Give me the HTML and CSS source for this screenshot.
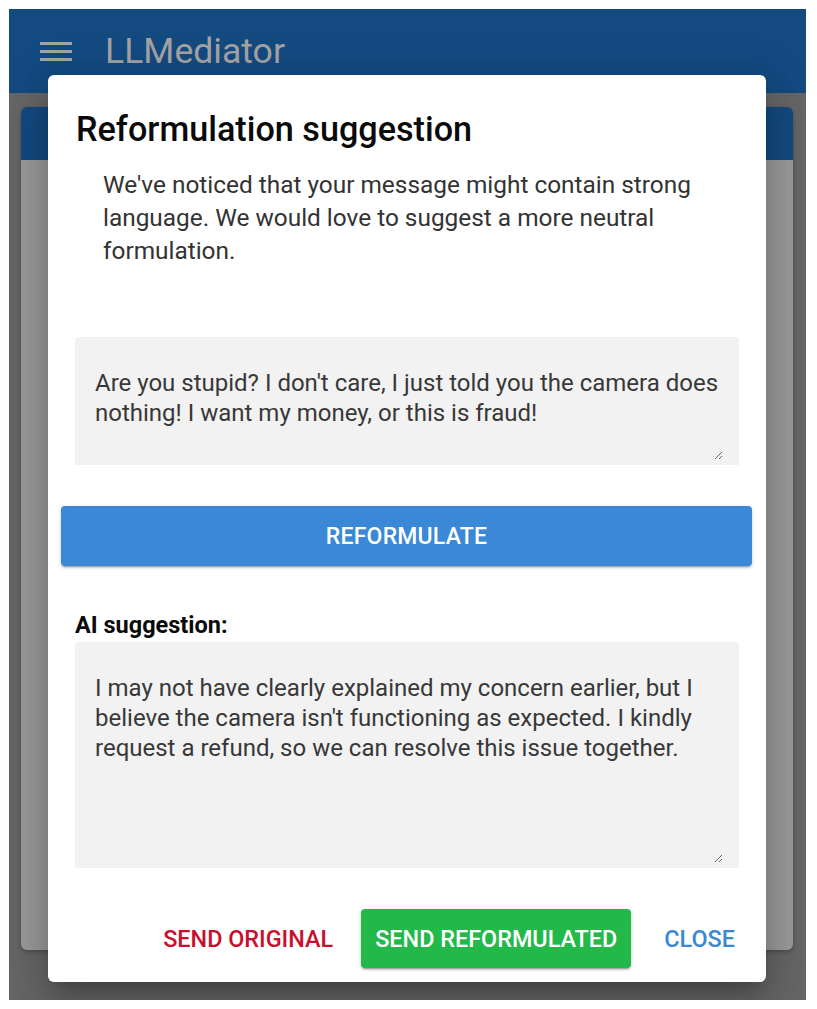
FILE: index.html
```html
<!DOCTYPE html>
<html lang="en">
<head>
<meta charset="utf-8">
<title>LLMediator</title>
<link rel="stylesheet" href="styles.css">
</head>
<body>
<div class="app">
  <header class="topbar">
    <svg class="menu-icon" width="32" height="20" viewBox="0 0 32 20" aria-hidden="true">
      <rect x="0" y="0" width="32" height="3" fill="#a3a3a3"/>
      <rect x="0" y="8" width="32" height="3" fill="#a3a3a3"/>
      <rect x="0" y="16" width="32" height="3" fill="#a3a3a3"/>
    </svg>
    <span class="brand">LLMediator</span>
  </header>
  <main class="main">
    <div class="card">
      <div class="card-strip"></div>
      <div class="card-body"></div>
    </div>
  </main>

  <div class="dialog">
    <h2 class="dialog-title">Reformulation suggestion</h2>
    <p class="dialog-text">We've noticed that your message might contain strong language. We would love to suggest a more neutral formulation.</p>
    <div class="field field-original">
      <textarea class="field-input" readonly>Are you stupid? I don't care, I just told you the camera does nothing! I want my money, or this is fraud!</textarea>
    </div>
    <button class="btn-reformulate" type="button">REFORMULATE</button>
    <div class="label">AI suggestion:</div>
    <div class="field field-suggestion">
      <textarea class="field-input" readonly>I may not have clearly explained my concern earlier, but I believe the camera isn't functioning as expected. I kindly request a refund, so we can resolve this issue together.</textarea>
    </div>
    <div class="dialog-actions">
      <button class="btn-text btn-red" type="button">SEND ORIGINAL</button>
      <button class="btn-green" type="button">SEND REFORMULATED</button>
      <button class="btn-text btn-blue" type="button">CLOSE</button>
    </div>
  </div>
</div>
</body>
</html>
```

FILE: styles.css
```css
* { box-sizing: border-box; }

html, body {
  margin: 0;
  padding: 0;
  background: #ffffff;
}

body {
  padding: 9px 11px 9px 9px;
  font-family: Roboto, "Noto Sans", Arial, sans-serif;
}

.app {
  position: relative;
  width: 797px;
  height: 991px;
  background: #666666;
  display: flex;
  flex-direction: column;
  overflow: hidden;
}

.topbar {
  height: 84px;
  background: #134a80;
  display: flex;
  align-items: center;
  padding-left: 31px;
}

.menu-icon {
  display: block;
  margin-top: 1px;
}

.brand {
  margin-left: 33px;
  font-size: 35.6px;
  line-height: 40px;
  color: #a3a3a3;
  font-weight: 400;
}

.main {
  flex: 1;
  padding: 14px 13px 0 12px;
}

.card {
  height: 843px;
  border-radius: 6px;
  overflow: hidden;
  display: flex;
  flex-direction: column;
  box-shadow: 0 2px 4px rgba(0,0,0,0.25);
}

.card-strip {
  height: 53px;
  background: #134a80;
}

.card-body {
  flex: 1;
  background: #9b9b9b;
}

.dialog {
  position: absolute;
  left: 39px;
  top: 66px;
  width: 718px;
  height: 907px;
  background: #ffffff;
  border-radius: 6px;
  box-shadow: 0 11px 15px -7px rgba(0,0,0,0.2), 0 24px 38px 3px rgba(0,0,0,0.14), 0 9px 46px 8px rgba(0,0,0,0.12);
  display: flex;
  flex-direction: column;
  padding: 34px 15px 14px 0;
}

.dialog-title {
  margin: 0 0 0 28px;
  font-size: 34.2px;
  line-height: 40px;
  font-weight: 500;
  color: #0a0a0a;
}

.dialog-text {
  margin: 19px 20px 0 55px;
  font-size: 24.4px;
  line-height: 33px;
  color: #333333;
}

.field {
  margin: 70px 12px 0 27px;
  background: #f2f2f2;
  border-radius: 4px 4px 0 0;
  padding: 31px 16px 5px 20px;
  display: flex;
}

.field-original { height: 128px; }
.field-suggestion { height: 226px; margin-top: 4px; }

.field-input {
  flex: 1;
  width: 100%;
  height: 100%;
  border: 0;
  outline: 0;
  padding: 0;
  margin: 0;
  background: transparent;
  resize: vertical;
  overflow: hidden;
  font-family: Roboto, "Noto Sans", Arial, sans-serif;
  font-size: 24px;
  line-height: 30px;
  color: #383838;
}

.btn-reformulate {
  margin: 41px 0 0 13px;
  height: 60px;
  width: 691px;
  border: 0;
  border-radius: 4px;
  background: #3a88d6;
  color: #ffffff;
  font-family: Roboto, "Noto Sans", Arial, sans-serif;
  font-size: 23px;
  font-weight: 500;
  letter-spacing: 0.2px;
  box-shadow: 0 3px 1px -2px rgba(0,0,0,0.2), 0 2px 2px 0 rgba(0,0,0,0.14), 0 1px 5px 0 rgba(0,0,0,0.12);
}

.label {
  margin: 46px 0 0 27px;
  font-size: 23.5px;
  line-height: 26px;
  font-weight: 700;
  color: #0a0a0a;
}

.dialog-actions {
  margin-top: auto;
  display: flex;
  justify-content: flex-end;
  align-items: center;
}

.btn-text, .btn-green {
  border: 0;
  font-family: Roboto, "Noto Sans", Arial, sans-serif;
  font-size: 23.4px;
  font-weight: 500;
  height: 59px;
  padding: 0 16px;
  border-radius: 4px;
  background: transparent;
}

.btn-red { color: #c8102e; }
.btn-blue { color: #3a88d6; margin-left: 17px; }

.btn-green {
  margin-left: 12px;
  background: #22b94a;
  color: #ffffff;
  padding: 0 14px;
  box-shadow: 0 3px 1px -2px rgba(0,0,0,0.2), 0 2px 2px 0 rgba(0,0,0,0.14), 0 1px 5px 0 rgba(0,0,0,0.12);
}
```
